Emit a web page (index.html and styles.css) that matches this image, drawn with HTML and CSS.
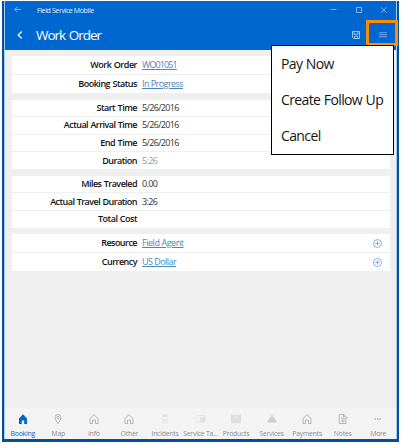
FILE: index.html
```html
<!DOCTYPE html>
<html lang="en">
<head>
<meta charset="utf-8">
<title>Field Service Mobile</title>
<link rel="stylesheet" href="styles.css">
</head>
<body>
<div class="window">
  <div class="app">
    <header class="header">
      <div class="titlebar">
        <svg class="back" viewBox="0 0 8 8"><path d="M7 3.500H.8M3.500.8L.8 3.500l2.700 2.700"/></svg>
        <span class="app-name">Field Service Mobile</span>
        <svg class="controls" viewBox="0 0 56 8"><path d="M0 3.500h5.500M25.500 1.500h5v5h-5zM50 1.200l5.500 5.500M55.500 1.200L50 6.700"/></svg>
      </div>
      <div class="toolbar">
        <svg class="chevron" viewBox="0 0 6 8"><path d="M4.700.5L1.200 4l3.500 3.500"/></svg>
        <h1 class="title">Work Order</h1>
        <svg class="save" viewBox="0 0 8 8"><path d="M.5.500h7v7h-6l-1-1zM2 .5v2.800h4V.5M2.500 7.500V5.200h3v2.300"/></svg>
        <svg class="burger" viewBox="0 0 8 6"><path d="M0 .8h8M0 2.800h8M0 4.800h8"/></svg>
      </div>
    </header>
    <main class="form">
      <section class="card tall">
        <div class="row"><span class="label short">Work Order</span><a class="link code">WO01051</a></div>
        <div class="row"><span class="label short">Booking Status</span><a class="link">In Progress</a></div>
      </section>
      <section class="card four">
        <div class="row"><span class="label short">Start Time</span><span class="value">5/26/2016</span></div>
        <div class="row"><span class="label">Actual Arrival Time</span><span class="value">5/26/2016</span></div>
        <div class="row"><span class="label short">End Time</span><span class="value">5/26/2016</span></div>
        <div class="row"><span class="label short">Duration</span><span class="value muted">5:26</span></div>
      </section>
      <section class="card three">
        <div class="row"><span class="label">Miles Traveled</span><span class="value">0.00</span></div>
        <div class="row"><span class="label">Actual Travel Duration</span><span class="value">3:26</span></div>
        <div class="row"><span class="label short">Total Cost</span></div>
      </section>
      <section class="card tall">
        <div class="row"><span class="label">Resource</span><a class="link agent">Field Agent</a><svg class="plus" viewBox="0 0 9 9"><circle cx="4.500" cy="4.500" r="4"/><path d="M4.500 2.200v4.600M2.200 4.500h4.600"/></svg></div>
        <div class="row"><span class="label">Currency</span><a class="link">US Dollar</a><svg class="plus" viewBox="0 0 9 9"><circle cx="4.500" cy="4.500" r="4"/><path d="M4.500 2.200v4.600M2.200 4.500h4.600"/></svg></div>
      </section>
    </main>
    <nav class="tabs">
      <div class="tab active"><svg viewBox="0 0 10 10"><path class="solid" d="M5 .3L1 4.500V10h2.800V6.500h2.400V10H9V4.500z"/></svg><span>Booking</span></div>
      <div class="tab"><svg viewBox="0 0 10 10"><path d="M5 9.700C4 7.500 2 5.500 2 3.500a3 3 0 0 1 6 0C8 5.500 6 7.500 5 9.700z"/><circle cx="5" cy="3.500" r="1.200"/></svg><span>Map</span></div>
      <div class="tab"><svg viewBox="0 0 10 10"><path d="M1 4.500L5 .7l4 3.800v5H6.500V6.200h-3v3.300H1z"/></svg><span>Info</span></div>
      <div class="tab"><svg viewBox="0 0 10 10"><path d="M1 4.500L5 .7l4 3.800v5H6.500V6.200h-3v3.300H1z"/></svg><span>Other</span></div>
      <div class="tab faint"><svg viewBox="0 0 10 10"><path d="M2 1h6M2.700 2.500h4.600M3 3.500v5M7 3.500v5M1.800 9h6.400M4.200 8V5.500h1.600V8"/><path class="solid" d="M3 1h4v2H3z"/></svg><span>Incidents</span></div>
      <div class="tab faint"><svg viewBox="0 0 10 10"><path d="M4.500 8.500L.8 7.500V1.500H9v2"/><path class="solid" d="M4.200 3.500L9.500 3v4.500L7.500 9 4.200 7.500z"/></svg><span>Service Ta...</span></div>
      <div class="tab faint"><svg viewBox="0 0 10 10"><path class="solid" d="M0 .8h10v8.400H0z"/><path class="light" d="M4 1v3h2V1"/></svg><span>Products</span></div>
      <div class="tab faint dish"><svg viewBox="0 0 10 10"><path class="solid" d="M4.500 1h1v1.500C8 3.500 8.500 6 9.800 7.500v1H.2v-1c1.300-1.500 1.800-4 4.300-5z"/></svg><span>Services</span></div>
      <div class="tab"><svg viewBox="0 0 10 10"><path d="M1 4.500L5 .7l4 3.800v5H6.500V6.200h-3v3.300H1z"/></svg><span>Payments</span></div>
      <div class="tab"><svg viewBox="0 0 10 10"><path d="M8 6.500v3H1.200v-9H6l2 2M5.500.5v2.200h2M3 4h3M3 6h2M4.500 8l.4-1.500L8.500 3l1 1-3.600 3.600z"/></svg><span>Notes</span></div>
      <div class="tab"><svg viewBox="0 0 10 10"><path class="dots" d="M1.500 5h7"/></svg><span>More</span></div>
    </nav>
  </div>
</div>
<div class="highlight"></div>
<div class="menu">
  <div class="item">Pay Now</div>
  <div class="item">Create Follow Up</div>
  <div class="item">Cancel</div>
</div>
</body>
</html>
```
FILE: styles.css
```css
* { box-sizing: border-box; }
body {
  margin: 0;
  width: 402px;
  height: 444px;
  padding: 1px 3px 2px 2px;
  background: #fff;
  overflow: hidden;
  font-family: "Open Sans", "Noto Sans", sans-serif;
}
.window {
  height: 441px;
  border: solid #0050a0;
  border-width: 0 2px 3px 2px;
}
.app {
  height: 438px;
  display: flex;
  flex-direction: column;
  background: #efefef;
  border: solid #a9cbea;
  border-width: 0 1px;
}
svg { display: block; fill: none; stroke: currentColor; flex: none; }
.header { height: 49px; background: #0066d0; color: #fff; flex: none; }
.titlebar { height: 18px; display: flex; align-items: center; padding: 0 9px; color: #a5cbf2; }
.back { width: 8px; height: 8px; stroke-width: .8; }
.app-name { margin-left: 15px; font-size: 7px; letter-spacing: -.38px; color: #e6f1fc; white-space: nowrap; }
.controls { width: 56px; height: 8px; margin-left: auto; stroke-width: .8; }
.toolbar { height: 31px; display: flex; align-items: center; padding: 0 9px 0 12px; }
.chevron { width: 6px; height: 8px; stroke-width: 1.200; }
.title { margin: 0 0 0 13px; font-size: 13.500px; font-weight: 400; letter-spacing: -1px; word-spacing: 1px; white-space: nowrap; }
.save { width: 8px; height: 8px; margin-left: auto; stroke-width: .8; color: #b9d7f5; }
.burger { width: 8px; height: 6px; margin-left: 19px; stroke-width: .8; color: #8fbdec; }
.form { flex: 1; padding: 6px 6px 0 7px; display: flex; flex-direction: column; gap: 6.500px; }
.card { background: #fff; display: flex; flex-direction: column; flex: none; }
.tall { height: 37px; }
.four { height: 69.500px; }
.three { height: 52px; }
.row { flex: 1; display: flex; align-items: center; padding-right: 9px; font-size: 9px; line-height: 12px; }
.row + .row { border-top: 1px solid #efefef; }
.label { width: 125px; text-align: right; font-weight: 600; letter-spacing: -.53px; word-spacing: .5px; color: #111; white-space: nowrap; }
.short { letter-spacing: -.48px; }
.value, .link { margin-left: 5px; letter-spacing: -.65px; white-space: nowrap; color: #333; }
.link { color: #4a87bd; letter-spacing: -.55px; text-decoration: underline; text-decoration-thickness: 1px; }
.code { letter-spacing: -.9px; }
.agent { letter-spacing: -.45px; }
.muted { color: #999; }
.plus { width: 9px; height: 9px; margin: 0 -1px 0 auto; color: #5794d8; stroke-width: .7; }
.tabs { height: 31px; flex: none; display: flex; background: #f3f3f3; color: #8e8e8e; }
.tab { flex: 1 1 0; min-width: 0; padding-top: 6px; display: flex; flex-direction: column; align-items: center; font-size: 6.800px; line-height: 9px; letter-spacing: -.2px; white-space: nowrap; }
.tab svg { width: 10px; height: 10px; margin-bottom: 5px; stroke-width: .6; }
.tab .solid { fill: currentColor; stroke: none; }
.tab .light { stroke: #f3f3f3; }
.tab .dots { stroke-width: 1; stroke-dasharray: 1.500 1; }
.active { color: #0066d0; }
.faint svg { color: #dfdfdf; }
.dish svg { color: #d0d0d0; }
.highlight { position: absolute; left: 366px; top: 20px; width: 32px; height: 26px; border: 3px solid #ff8c00; }
.menu { position: absolute; left: 271px; top: 45px; width: 123px; height: 110px; border: 1px solid #000; background: #fff; padding-left: 9px; }
.item { height: 36px; line-height: 36px; font-size: 14px; letter-spacing: -.62px; word-spacing: .5px; color: #151515; white-space: nowrap; }
```
